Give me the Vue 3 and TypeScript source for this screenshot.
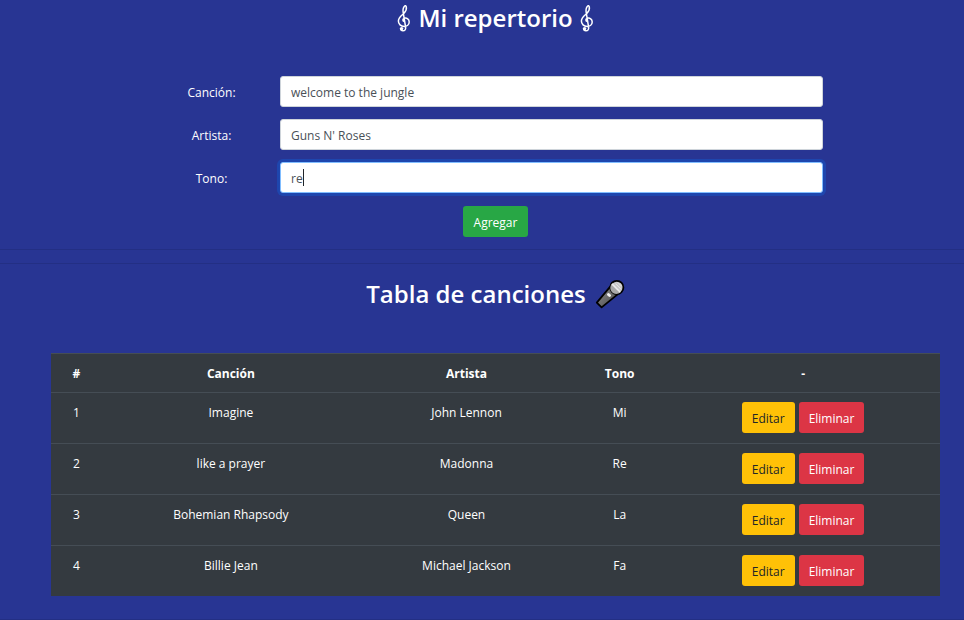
<script setup lang="ts">
import { onMounted, ref } from 'vue'

interface Song {
  title: string
  artist: string
  tone: string
}

const title = ref('welcome to the jungle')
const artist = ref("Guns N' Roses")
const tone = ref('re')
const toneInput = ref<HTMLInputElement | null>(null)

const songs = ref<Song[]>([
  { title: 'Imagine', artist: 'John Lennon', tone: 'Mi' },
  { title: 'like a prayer', artist: 'Madonna', tone: 'Re' },
  { title: 'Bohemian Rhapsody', artist: 'Queen', tone: 'La' },
  { title: 'Billie Jean', artist: 'Michael Jackson', tone: 'Fa' },
])

function addSong() {
  songs.value.push({ title: title.value, artist: artist.value, tone: tone.value })
  title.value = ''
  artist.value = ''
  tone.value = ''
}

function editSong(index: number) {
  const song = songs.value[index]
  title.value = song.title
  artist.value = song.artist
  tone.value = song.tone
  songs.value.splice(index, 1)
}

function removeSong(index: number) {
  songs.value.splice(index, 1)
}

onMounted(() => toneInput.value?.focus())
</script>

<template>
  <main class="page">
    <svg class="defs" aria-hidden="true">
      <symbol id="clef" viewBox="0 0 14 28">
        <path
          d="M7.2 17.6C5.6 17.3 5.2 14.8 7.4 14.2C9.8 13.6 12.2 15.3 12.2 18C12.2 20.8 9.8 22.4 7.2 22.4C3.8 22.4 1.4 20.2 1.4 17C1.4 13.4 4.6 11.6 7 9.2C8.8 7.4 9.8 5.4 9.3 3C9 1.6 8.2 1.2 7.4 2.2C5.8 4 5.8 6.6 6.3 9.2L8.6 23.2C9 25.6 7.8 26.8 6 26.8C4.6 26.8 3.6 25.8 3.6 24.6"
          fill="none"
          stroke="currentColor"
          stroke-width="1.5"
          stroke-linecap="round"
          stroke-linejoin="round"
        />
        <circle cx="4.6" cy="24.6" r="1.7" fill="currentColor" />
      </symbol>
    </svg>

    <section class="content">
      <h1 class="heading">
        <svg class="clef" aria-hidden="true"><use href="#clef" /></svg>
        <span>Mi repertorio</span>
        <svg class="clef" aria-hidden="true"><use href="#clef" /></svg>
      </h1>

      <form class="form" @submit.prevent="addSong">
        <div class="field">
          <label for="title">Canción:</label>
          <input id="title" v-model="title" type="text" autocomplete="off" />
        </div>
        <div class="field">
          <label for="artist">Artista:</label>
          <input id="artist" v-model="artist" type="text" autocomplete="off" />
        </div>
        <div class="field">
          <label for="tone">Tono:</label>
          <div class="caret-box">
            <input id="tone" ref="toneInput" v-model="tone" type="text" autocomplete="off" />
            <div class="caret-line" aria-hidden="true">
              <span class="caret-text">{{ tone }}</span><span class="caret"></span>
            </div>
          </div>
        </div>
        <button class="btn add" type="submit">Agregar</button>
      </form>
    </section>

    <hr />
    <hr />

    <section class="content">
      <h2 class="heading">
        <span>Tabla de canciones</span>
        <svg class="mic" viewBox="0 0 30 30" aria-hidden="true">
          <defs>
            <linearGradient id="handle" x1="0" y1="0" x2="1" y2="1">
              <stop offset="0" stop-color="#8a8a8a" />
              <stop offset="0.5" stop-color="#6c6c6c" />
              <stop offset="1" stop-color="#444444" />
            </linearGradient>
          </defs>
          <path d="M15 7.8L1.8 23.6L6.6 28.4L22.6 15.4Z" fill="url(#handle)" stroke="#000" stroke-width="1.8" stroke-linejoin="round" />
          <circle cx="21.8" cy="8.4" r="6.6" fill="#c9c9c9" stroke="#000" stroke-width="1.8" />
          <path d="M17 4.8A5.8 5.8 0 0 0 25.4 13.2Z" fill="#a8a8a8" />
          <path d="M16.9 4.9L25.3 13.3" stroke="#ececec" stroke-width="1.5" />
          <path d="M20.5 4.6L25.8 9.9M23 3.6L26.7 7.3" stroke="#e4e4e4" stroke-width="1" />
          <path d="M13.4 15.4L14.6 16.6" stroke="#f2f2f2" stroke-width="2.8" stroke-linecap="round" />
        </svg>
      </h2>

      <table class="songs">
        <colgroup>
          <col class="col-number" />
          <col class="col-title" />
          <col class="col-artist" />
          <col class="col-tone" />
          <col />
        </colgroup>
        <thead>
          <tr>
            <th scope="col">#</th>
            <th scope="col">Canción</th>
            <th scope="col">Artista</th>
            <th scope="col">Tono</th>
            <th scope="col">-</th>
          </tr>
        </thead>
        <tbody>
          <tr v-for="(song, index) in songs" :key="index">
            <td>{{ index + 1 }}</td>
            <td>{{ song.title }}</td>
            <td>{{ song.artist }}</td>
            <td>{{ song.tone }}</td>
            <td class="actions-cell">
              <div class="actions">
                <button class="btn edit" type="button" @click="editSong(index)">Editar</button>
                <button class="btn remove" type="button" @click="removeSong(index)">Eliminar</button>
              </div>
            </td>
          </tr>
        </tbody>
      </table>
    </section>

    <hr class="last" />
  </main>
</template>

<style>
body {
  background: #283593;
}
</style>

<style scoped>
* {
  box-sizing: border-box;
}

.page {
  color: #fff;
  font-family: 'Open Sans', 'Noto Sans', sans-serif;
  font-size: 12px;
  line-height: 19px;
}

.defs {
  display: block;
  width: 0;
  height: 0;
}

.content {
  padding: 0 24px 0 51px;
}

.heading {
  display: flex;
  align-items: center;
  justify-content: center;
  gap: 7px;
  margin: 0;
  padding: 2px 0 43px;
  font-size: 24px;
  font-weight: 600;
  line-height: 31px;
}

.clef {
  width: 14px;
  height: 28px;
}

.mic {
  width: 30px;
  height: 30px;
  margin-left: 2px;
}

.form {
  display: flex;
  flex-direction: column;
  gap: 12px;
  margin: 0 117px;
}

.field {
  display: grid;
  grid-template-columns: 87px 1fr;
  column-gap: 25px;
  align-items: center;
  text-align: center;
}

label {
  padding-top: 2px;
}

input {
  display: block;
  width: 100%;
  height: 31px;
  padding: 2px 10px 0;
  border: 1px solid #ced4da;
  border-radius: 3px;
  background: #fff;
  color: #495057;
  font: inherit;
  outline: none;
}

input:focus {
  border-color: #80bdff;
  box-shadow: 0 0 0 3px rgba(0, 123, 255, 0.25);
}

.caret-box {
  position: relative;
}

.caret-box input {
  caret-color: transparent;
}

.caret-line {
  position: absolute;
  inset: 0;
  display: flex;
  align-items: center;
  padding: 0 11px;
  pointer-events: none;
}

.caret-text {
  visibility: hidden;
}

.caret {
  width: 1px;
  height: 17px;
  background: #212529;
  visibility: hidden;
}

input:focus + .caret-line .caret {
  visibility: visible;
}

.btn {
  height: 31px;
  padding: 2px 10px 0;
  border: 0;
  border-radius: 3px;
  color: #fff;
  font: inherit;
  cursor: pointer;
}

.add {
  align-self: center;
  margin-top: 1px;
  padding: 2px 11px 0;
  background: #28a745;
}

.edit {
  background: #ffc107;
  color: #212529;
}

.remove {
  background: #dc3545;
}

hr {
  margin: 12px 0 13px;
  border: 0;
  border-top: 1px solid rgba(0, 0, 0, 0.1);
}

hr + .content .heading {
  padding: 1px 0 44px;
}

.last {
  margin: 23px 0 0;
}

.songs {
  width: 100%;
  border-collapse: separate;
  border-spacing: 0;
  table-layout: fixed;
  background: #343a40;
  text-align: center;
}

.col-number {
  width: 51px;
}

.col-title {
  width: 29%;
}

.col-artist {
  width: 24%;
}

.col-tone {
  width: 93px;
}

th,
td {
  padding: 10px 9px 9px;
  border-top: 1px solid #454d55;
  vertical-align: top;
}

.actions-cell {
  padding: 9px 9px 10px;
}

th {
  font-weight: 700;
}

.actions {
  display: flex;
  justify-content: center;
  gap: 4px;
}
</style>
